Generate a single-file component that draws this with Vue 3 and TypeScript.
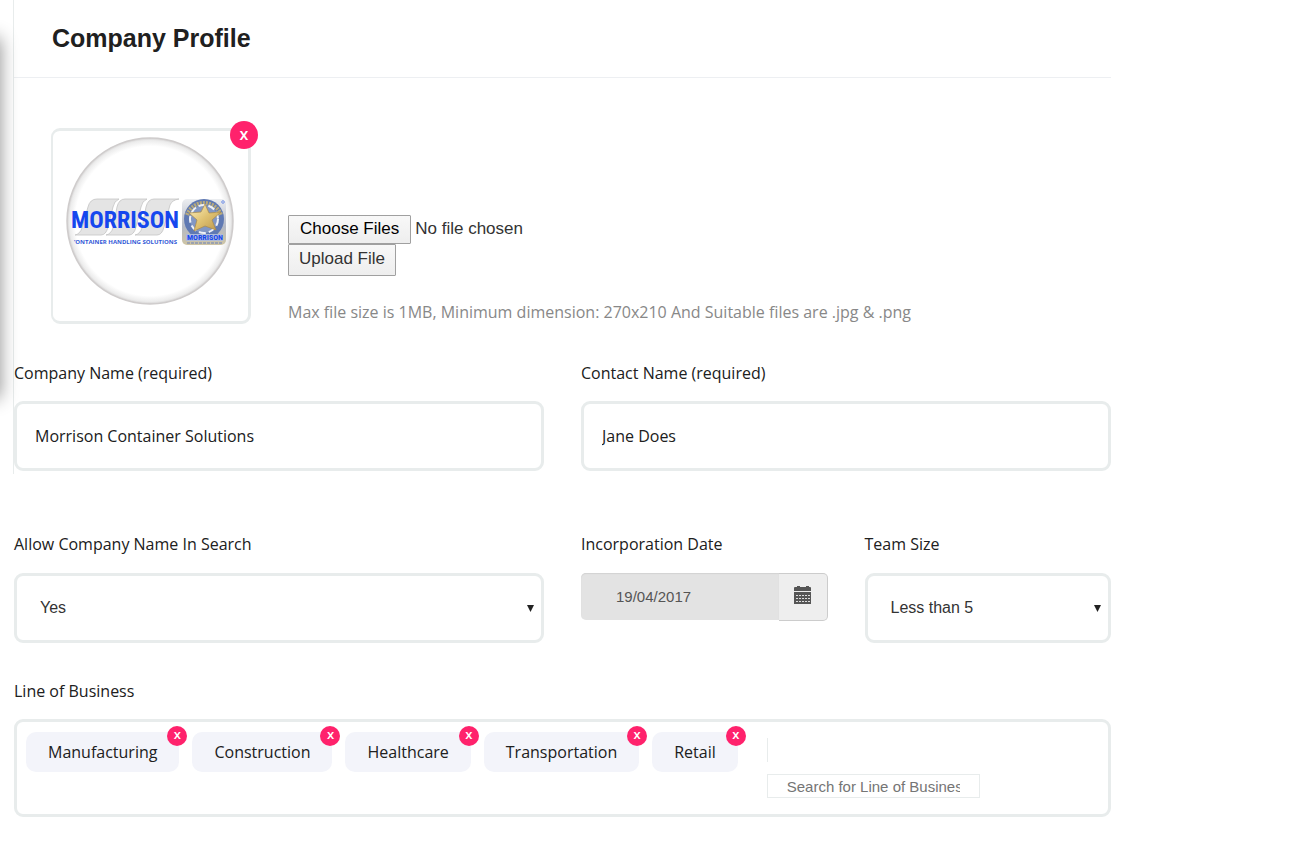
<script setup lang="ts">
import { ref } from 'vue'

const companyName = ref('Morrison Container Solutions')
const contactName = ref('Jane Does')
const searchable = ref('Yes')
const teamSize = ref('Less than 5')
const incorporated = ref('19/04/2017')
const search = ref('')
const showLogo = ref(true)
const business = ref<string[]>(['Manufacturing', 'Construction', 'Healthcare', 'Transportation', 'Retail'])

function removeTag(name: string): void {
  business.value = business.value.filter((item) => item !== name)
}
</script>

<template>
  <div class="page">
    <div class="side-shadow" aria-hidden="true"></div>
    <form class="profile" @submit.prevent>
      <section class="intro">
        <header class="heading">
          <h1>Company Profile</h1>
        </header>

        <div class="upload">
          <div class="logo-card">
            <svg v-if="showLogo" class="logo" viewBox="0 0 168 168" role="img" aria-label="Morrison Container Handling Solutions">
              <defs>
                <radialGradient id="rim">
                  <stop offset="0.9" stop-color="#fff" />
                  <stop offset="0.97" stop-color="#ececec" />
                  <stop offset="1" stop-color="#d2d0d0" />
                </radialGradient>
                <linearGradient id="gold" x1="0" y1="0" x2="1" y2="1">
                  <stop offset="0" stop-color="#fff3c4" />
                  <stop offset="0.5" stop-color="#e0c272" />
                  <stop offset="1" stop-color="#b8934a" />
                </linearGradient>
                <linearGradient id="plate" x1="0" y1="0" x2="0" y2="1">
                  <stop offset="0" stop-color="#eceef1" />
                  <stop offset="0.6" stop-color="#b4b9c6" />
                  <stop offset="1" stop-color="#cfc5a4" />
                </linearGradient>
              </defs>
              <circle cx="84" cy="84" r="83" fill="url(#rim)" stroke="#cfcccc" stroke-width="1.5" />
              <g fill="#e4e4e4" stroke="#c4c4c4" stroke-width="0.8">
                <path d="M31 62h22q-5 2-6 8l-5 20q-2 8-7 8H9q5-1 7-7l6-21q2-8 9-8z" />
                <path d="M59 62h22q-5 2-6 8l-5 20q-2 8-7 8H40q5-1 7-7l4-21q2-8 8-8z" />
                <path d="M88 62h25q-7 1-9 6l-6 22q-2 8-7 8H69q5-1 7-7l4-21q2-8 8-8z" />
              </g>
              <text class="brand" x="5" y="91" font-size="24">MORRISON</text>
              <text class="tagline" x="8" y="107" font-size="6">&#8217;ONTAINER HANDLING SOLUTIONS</text>
              <rect x="116" y="62" width="44" height="46" rx="5" fill="url(#plate)" />
              <circle cx="138" cy="82" r="20" fill="#5f79b3" />
              <path d="M121 78a18 18 0 0 1 34 0" fill="none" stroke="#b9ab7c" stroke-width="4" stroke-dasharray="2 1" />
              <circle cx="138" cy="82" r="14" fill="#8297c4" stroke="#eef1f6" stroke-width="2" stroke-dasharray="7 3" />
              <path d="M139 67l4 9 12-1-9 8 4 10-11-4-11 5 3-11-8-7 12-1z" fill="url(#gold)" stroke="#a98a48" stroke-width="0.7" />
              <rect x="120" y="97" width="37" height="7" fill="#aebbd9" />
              <text class="brand" x="121" y="103" font-size="8">MORRISON</text>
              <path d="M121 106h36" stroke="#8a97b4" stroke-width="1.5" stroke-dasharray="3 1" />
              <circle cx="157" cy="65" r="1.3" fill="none" stroke="#5d82e6" stroke-width="0.8" />
            </svg>
            <button class="remove remove-logo" type="button" aria-label="Remove logo" @click="showLogo = false">x</button>
          </div>

          <div class="upload-controls">
            <input class="file" type="file" multiple accept=".jpg,.png" aria-label="Company logo" />
            <button class="upload-button" type="submit">Upload File</button>
            <p>Max file size is 1MB, Minimum dimension: 270x210 And Suitable files are .jpg &amp; .png</p>
          </div>
        </div>

        <div class="grid">
          <div class="field wide">
            <label for="company">Company Name (required)</label>
            <input id="company" v-model="companyName" class="control" type="text" required />
          </div>
          <div class="field wide">
            <label for="contact">Contact Name (required)</label>
            <input id="contact" v-model="contactName" class="control" type="text" required />
          </div>
        </div>
      </section>

      <section class="grid details">
        <div class="field wide">
          <label for="searchable">Allow Company Name In Search</label>
          <div class="select-wrap">
            <select id="searchable" v-model="searchable" class="control">
              <option>Yes</option>
              <option>No</option>
            </select>
            <svg class="arrow" viewBox="0 0 7 7" aria-hidden="true"><path d="M0 0h7L3.5 7z" /></svg>
          </div>
        </div>
        <div class="field">
          <label for="date">Incorporation Date</label>
          <div class="date">
            <input id="date" v-model="incorporated" type="text" readonly />
            <button type="button" aria-label="Pick a date">
              <svg viewBox="0 0 18 18" aria-hidden="true">
                <path d="M0 5V2q0-1 1-1h2V0h3v1h6V0h3v1h1q1 0 1 1v3z" />
                <path d="M0 6h17v12H0z" />
                <path class="cells" d="M2 9.500h14M2 12.500h14M2 15.500h14" />
              </svg>
            </button>
          </div>
        </div>
        <div class="field">
          <label for="team">Team Size</label>
          <div class="select-wrap">
            <select id="team" v-model="teamSize" class="control">
              <option>Less than 5</option>
              <option>5 to 20</option>
              <option>More than 20</option>
            </select>
            <svg class="arrow" viewBox="0 0 7 7" aria-hidden="true"><path d="M0 0h7L3.5 7z" /></svg>
          </div>
        </div>
      </section>

      <section class="field business">
        <label for="business">Line of Business</label>
        <div class="tag-box">
          <ul class="tags">
            <li v-for="item in business" :key="item" class="tag">
              {{ item }}
              <button class="remove" type="button" :aria-label="`Remove ${item}`" @click="removeTag(item)">x</button>
            </li>
          </ul>
          <div class="search">
            <span class="divider" aria-hidden="true"></span>
            <input id="business" v-model="search" type="text" placeholder="Search for Line of Business" />
          </div>
        </div>
      </section>
    </form>
  </div>
</template>

<style>
body {
  background: #fff;
}
</style>

<style scoped>
* {
  box-sizing: border-box;
}

.page {
  position: relative;
  overflow: hidden;
  padding: 0 186px 40px 13px;
  color: #202020;
  font: 16px/24px "Open Sans", sans-serif;
}

.side-shadow {
  position: absolute;
  top: 38px;
  left: -20px;
  width: 20px;
  height: 360px;
  box-shadow: 0 0 18px rgba(0, 0, 0, 0.45);
}

.intro {
  border-left: 1px solid #e8ecec;
  padding-bottom: 3px;
}

.heading {
  padding: 23px 38px 24px;
  border-bottom: 1px solid #edeff2;
}

h1 {
  margin: 0;
  font: bold 25px/30px "Liberation Sans", Arial, sans-serif;
}

.upload {
  display: flex;
  align-items: flex-end;
  gap: 37px;
  padding: 50px 37px 0;
}

.logo-card {
  position: relative;
  flex: none;
  width: 200px;
  height: 196px;
  padding: 6px 13px;
  border: solid #e8ecec;
  border-width: 3px 3px 3px 2px;
  border-radius: 9px;
}

.logo {
  display: block;
  width: 168px;
  height: 168px;
}

.brand {
  fill: #1647ee;
  font-family: "Liberation Sans Narrow", "Roboto Condensed", Roboto, sans-serif;
  font-weight: 700;
}

.tagline {
  fill: #3158d7;
  font-family: "Open Sans", sans-serif;
  font-weight: 700;
}

.remove {
  position: absolute;
  top: -6px;
  right: -8px;
  width: 20px;
  height: 20px;
  padding: 0 0 4px;
  border: 0;
  border-radius: 50%;
  background: #ff226c;
  color: #fff;
  font: 600 13px/16px "Open Sans", sans-serif;
}

.remove-logo {
  top: -10px;
  right: -10px;
  width: 28px;
  height: 28px;
  padding: 0 0 2px;
  font-size: 16px;
}

.upload-controls {
  min-width: 0;
  color: #333;
  font: 17px/20px "Liberation Sans", Arial, sans-serif;
}

.file {
  display: block;
  width: 100%;
  height: 29px;
  color: #333;
  font: inherit;
}

.file::file-selector-button,
.upload-button {
  height: 29px;
  padding: 0 11px 1px;
  border: 1px solid #a0a0a0;
  border-radius: 1px;
  background: linear-gradient(#f8f8f8, #eee);
  color: #000;
  font: inherit;
}

.file::file-selector-button {
  margin: 0 4px 0 0;
}

.upload-button {
  display: block;
  height: 32px;
  padding: 0 10px 2px;
  color: #333;
}

p {
  margin: 24px 0 0;
  color: #888;
  font: 16px/24px "Open Sans", sans-serif;
}

.grid {
  display: grid;
  grid-template-columns: repeat(4, minmax(0, 1fr));
  gap: 37px;
  padding-top: 37px;
}

.details {
  padding: 58px 0 0 1px;
}

.wide {
  grid-column: span 2;
}

label {
  display: block;
  margin-bottom: 16px;
}

.details label {
  margin-bottom: 17px;
}

.control {
  display: block;
  width: 100%;
  height: 70px;
  padding: 0 18px;
  border: 3px solid #e8ecec;
  border-radius: 9px;
  background: #fff;
  color: #202020;
  font: inherit;
}

.select-wrap {
  position: relative;
}

select.control {
  appearance: none;
  padding: 0 23px;
  color: #333;
  font: 16px/24px "Liberation Sans", Arial, sans-serif;
}

.arrow {
  position: absolute;
  top: 32px;
  right: 10px;
  width: 7px;
  height: 7px;
  fill: #222;
  pointer-events: none;
}

.date {
  display: flex;
  height: 48px;
}

.date input {
  flex: 1;
  min-width: 0;
  height: 47px;
  padding: 0 35px;
  border: 0;
  border-radius: 5px 0 0 5px;
  background: #e3e3e3;
  box-shadow: inset 0 1px 1px #d2d2d2;
  color: #555;
  font: 15px/20px "Liberation Sans", Arial, sans-serif;
}

.date button {
  width: 49px;
  padding: 0 0 4px 15px;
  border: 1px solid #ccc;
  border-left: 0;
  border-radius: 0 5px 5px 0;
  background: #eee;
}

.date svg {
  display: block;
  width: 18px;
  height: 18px;
  fill: #555;
}

.cells {
  stroke: #ddd;
  stroke-dasharray: 2 1;
}

.business {
  padding: 36px 0 0 1px;
}

.tag-box {
  display: flex;
  gap: 29px;
  min-height: 98px;
  padding: 10px 9px;
  border: 3px solid #e8ecec;
  border-radius: 9px;
}

.tags {
  display: flex;
  gap: 13px;
  margin: 0;
  padding: 0;
  list-style: none;
}

.tag {
  position: relative;
  height: 40px;
  padding: 8px 22px;
  border-radius: 10px;
  background: #f3f4fa;
}

.search {
  padding-top: 6px;
}

.divider {
  display: block;
  height: 24px;
  border-left: 1px solid #e8ecec;
}

.search input {
  display: block;
  width: 213px;
  height: 24px;
  margin-top: 12px;
  padding: 0 19px;
  border: 1px solid #e8ecec;
  font: 15px/20px "Liberation Sans", Arial, sans-serif;
}

.search input::placeholder {
  color: #757575;
}
</style>
